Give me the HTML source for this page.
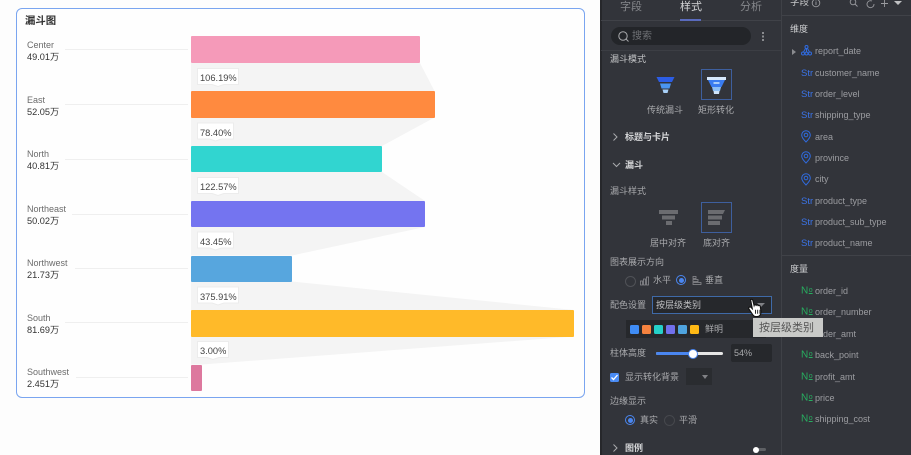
<!DOCTYPE html>
<html><head><meta charset="utf-8">
<style>
html,body{margin:0;padding:0}
body{width:911px;height:455px;overflow:hidden;background:#fdfdfd;position:relative;font-family:"Liberation Sans","Noto Sans CJK SC",sans-serif}
.t{position:absolute;white-space:nowrap;line-height:12px;height:12px;font-size:9px;color:#a9aaad}
.b{font-weight:700;color:#d4d5d7}
.f{color:#9c9da1;left:815px}
.s{left:801px;color:#3b74e8;font-size:9.5px;margin-top:1px}
.n{left:801px;color:#27ae60;font-size:10px}
.n span{font-size:7px;text-decoration:underline;vertical-align:1.500px;margin-left:.5px}
.l{color:#6b6b6b}.v{color:#333;font-size:9.2px}
.p{color:#444;font-size:9.3px;left:200px}
.a{position:absolute}
.line{position:absolute;height:1px;background:#efefef}
.bar{position:absolute;left:191px;border-radius:1px}
.sw{position:absolute;top:325px;width:9px;height:9px;border-radius:1.5px}
</style></head><body>
<div class="a" style="left:16px;top:8px;width:569px;height:390px;box-sizing:border-box;border:1px solid #7aa5f0;border-radius:6px;background:#fefefe"></div>
<div class="t" style="left:25px;top:16px;font-size:10.4px;font-weight:700;color:#333">漏斗图</div>
<svg class="a" style="left:0;top:0" width="600" height="455"><g fill="#f4f4f4">
<polygon points="191,63 420,63 434.5,91 191,91"/>
<polygon points="191,117.5 434.5,117.5 382,146 191,146"/>
<polygon points="191,172 382,172 425,201 191,201"/>
<polygon points="191,227 425,227 292,255.5 191,255.5"/>
<polygon points="191,281.5 292,281.5 574,310 191,310"/>
<polygon points="191,336.5 574,336.5 202,364.5 191,364.5"/>
</g>
<g fill="#fff" stroke="#ececec" stroke-width="1" stroke-linejoin="round">
<polygon points="197.5,68.5 238.5,68.5 238.5,84.5 224,84.5 218,86.5 212,84.5 197.5,84.5"/>
<polygon points="197.5,123 233.5,123 233.5,139 221.5,139 215.5,141 209.5,139 197.5,139"/>
<polygon points="197.5,177.5 238.5,177.5 238.5,193.5 224,193.5 218,195.5 212,193.5 197.5,193.5"/>
<polygon points="197.5,232 233.5,232 233.5,248 221.5,248 215.5,250 209.5,248 197.5,248"/>
<polygon points="197.5,287 238.5,287 238.5,303 224,303 218,305 212,303 197.5,303"/>
<polygon points="197.5,341.5 228.5,341.5 228.5,357.5 219,357.5 213,359.5 207,357.5 197.5,357.5"/>
</g></svg>
<div class="bar" style="top:36px;width:229px;height:27px;background:#f59ab9"></div>
<div class="bar" style="top:91px;width:243.5px;height:26.5px;background:#ff8a3f"></div>
<div class="bar" style="top:146px;width:191px;height:26px;background:#31d5d0"></div>
<div class="bar" style="top:201px;width:234px;height:26px;background:#7474f0"></div>
<div class="bar" style="top:255.5px;width:101px;height:26px;background:#57a6de"></div>
<div class="bar" style="top:310px;width:383px;height:26.5px;background:#ffba29"></div>
<div class="bar" style="top:364.5px;width:11px;height:26.5px;background:#dd789e"></div>

<div class="t l" style="left:27px;top:39px">Center</div><div class="t v" style="left:27px;top:51px">49.01万</div>
<div class="t l" style="left:27px;top:93.5px">East</div><div class="t v" style="left:27px;top:105.5px">52.05万</div>
<div class="t l" style="left:27px;top:148px">North</div><div class="t v" style="left:27px;top:160px">40.81万</div>
<div class="t l" style="left:27px;top:203px">Northeast</div><div class="t v" style="left:27px;top:215px">50.02万</div>
<div class="t l" style="left:27px;top:257px">Northwest</div><div class="t v" style="left:27px;top:269px">21.73万</div>
<div class="t l" style="left:27px;top:311.5px">South</div><div class="t v" style="left:27px;top:323.5px">81.69万</div>
<div class="t l" style="left:27px;top:366px">Southwest</div><div class="t v" style="left:27px;top:378px">2.451万</div>
<div class="line" style="left:65px;width:123px;top:49px"></div>
<div class="line" style="left:65px;width:123px;top:104px"></div>
<div class="line" style="left:65px;width:123px;top:159px"></div>
<div class="line" style="left:72px;width:116px;top:214px"></div>
<div class="line" style="left:75px;width:113px;top:268px"></div>
<div class="line" style="left:65px;width:123px;top:322px"></div>
<div class="line" style="left:76px;width:112px;top:377px"></div>

<div class="t p" style="top:72px">106.19%</div>
<div class="t p" style="top:126.5px">78.40%</div>
<div class="t p" style="top:181px">122.57%</div>
<div class="t p" style="top:235.5px">43.45%</div>
<div class="t p" style="top:290.5px">375.91%</div>
<div class="t p" style="top:345px">3.00%</div>

<!-- panels -->
<div class="a" style="left:600px;top:0;width:311px;height:455px;background:#32343a"></div>
<div class="a" style="left:600px;top:0;width:1.5px;height:455px;background:#26272b"></div>
<div class="a" style="left:781px;top:0;width:1px;height:455px;background:#3f4147"></div>
<div class="a" style="left:601px;top:20px;width:180px;height:1px;background:#404248"></div>
<div class="a" style="left:601px;top:50px;width:180px;height:1px;background:#3c3e44"></div>
<div class="a" style="left:782px;top:15px;width:129px;height:1px;background:#404248"></div>
<div class="a" style="left:782px;top:255px;width:129px;height:1px;background:#404248"></div>

<div class="t" style="left:620px;top:0.5px;font-size:11px;color:#85878b">字段</div>
<div class="t" style="left:680px;top:0.5px;font-size:11px;color:#d5d6d8">样式</div>
<div class="t" style="left:740px;top:0.5px;font-size:11px;color:#85878b">分析</div>
<div class="a" style="left:680px;top:19px;width:21px;height:2px;background:#5a6bbd"></div>

<div class="a" style="left:611px;top:27px;width:140px;height:18px;border-radius:9px;background:#232529"></div>
<svg class="a" style="left:617px;top:30px" width="13" height="13" fill="none" stroke="#a9aaad" stroke-width="1"><circle cx="6" cy="6" r="4.2"/><path d="M9 9l2.5 2.5"/></svg>
<div class="t" style="left:632px;top:31px;font-size:10px;color:#6e7074">搜索</div>
<div class="a" style="left:762px;top:32px;width:2px;height:2px;background:#8a8b8f;box-shadow:0 3.5px #8a8b8f,0 7px #8a8b8f"></div>

<div class="t" style="left:610px;top:52.5px;color:#c3c4c6">漏斗模式</div>
<svg class="a" style="left:650px;top:72px" width="30" height="26"><polygon points="6.5,5 24.5,5 22,10 9,10" fill="#2c5de5"/><polygon points="10,11.5 21,11.5 19.5,16.5 11.5,16.5" fill="#4a95f0"/><polygon points="12.5,17.5 18.5,17.5 17.5,21 13.5,21" fill="#a8d0f8"/></svg>
<div class="a" style="left:701px;top:69px;width:31px;height:31px;box-sizing:border-box;border:1px solid #3e5f9e"></div>
<svg class="a" style="left:701px;top:69px" width="31" height="31"><polygon points="6,8 25,8 25,11 6,11" fill="#d8e9fc"/><polygon points="7,11 24,11 20.5,18 10.5,18" fill="#3a7cf0"/><rect x="12.5" y="13" width="6" height="2" fill="#a9cdf8"/><polygon points="11,18 20,18 19,22 12,22" fill="#8dc0f7"/><polygon points="12.5,22 18.5,22 18,25 13,25" fill="#cfe4fb"/></svg>
<div class="t" style="left:647px;top:104px">传统漏斗</div>
<div class="t" style="left:698px;top:104px">矩形转化</div>

<svg class="a" style="left:611px;top:131px" width="9" height="12" fill="none" stroke="#a9aaad"><path d="M2.5 2.5l3.5 3.5-3.5 3.5"/></svg>
<div class="t b" style="left:625px;top:131px">标题与卡片</div>
<svg class="a" style="left:611px;top:160px" width="10" height="10" fill="none" stroke="#a9aaad"><path d="M2 3l3.5 3.5L9 3"/></svg>
<div class="t b" style="left:625px;top:159px">漏斗</div>
<div class="t" style="left:610px;top:185px">漏斗样式</div>
<svg class="a" style="left:655px;top:208px" width="26" height="20" fill="#6b6c70"><rect x="4" y="2" width="19" height="4"/><rect x="7" y="7.5" width="13" height="4"/><rect x="11" y="13" width="6" height="4"/></svg>
<div class="a" style="left:701px;top:202px;width:31px;height:31px;box-sizing:border-box;border:1px solid #3e5f9e"></div>
<svg class="a" style="left:705px;top:208px" width="22" height="20" fill="#6b6c70"><polygon points="3,2 20,2 18,6 3,6"/><rect x="3" y="7.5" width="14" height="4"/><rect x="3" y="13" width="12" height="4"/></svg>
<div class="t" style="left:650px;top:237px">居中对齐</div>
<div class="t" style="left:703px;top:237px">底对齐</div>
<div class="t" style="left:610px;top:256px">图表展示方向</div>
<div class="a" style="left:625px;top:276px;width:9px;height:9px;border:1px solid #505257;border-radius:50%"></div>
<svg class="a" style="left:640px;top:276px" width="10" height="10" fill="none" stroke="#8a8b8f" stroke-width=".8"><rect x=".5" y="5" width="2" height="4"/><rect x="3.5" y="3" width="2" height="6"/><rect x="6.5" y="1" width="2" height="8"/></svg>
<div class="t" style="left:653px;top:274px">水平</div>
<div class="a" style="left:676px;top:275px;width:10px;height:10px;box-sizing:border-box;border:1px solid #4a86f0;border-radius:50%"></div>
<div class="a" style="left:678.5px;top:277.5px;width:5px;height:5px;background:#4a86f0;border-radius:50%"></div>
<svg class="a" style="left:692px;top:276px" width="10" height="10" fill="none" stroke="#8a8b8f" stroke-width=".8"><rect x="1" y=".5" width="3" height="2"/><rect x="1" y="3.5" width="5" height="2"/><rect x="1" y="6.5" width="8" height="2"/></svg>
<div class="t" style="left:705px;top:274px">垂直</div>

<div class="t" style="left:610px;top:299px">配色设置</div>
<div class="a" style="left:652px;top:296px;width:120px;height:18px;box-sizing:border-box;border:1px solid #3f6aa8;background:#26282c"></div>
<div class="t" style="left:656px;top:299px;color:#c0c1c3">按层级类别</div>
<div class="a" style="left:757px;top:303px;border-left:4px solid transparent;border-right:4px solid transparent;border-top:4px solid #808185"></div>
<div class="a" style="left:626px;top:320px;width:140px;height:18px;background:#26282c"></div>
<div class="sw" style="left:630px;background:#3f8cf5"></div>
<div class="sw" style="left:642px;background:#f5823f"></div>
<div class="sw" style="left:654px;background:#25d0c8"></div>
<div class="sw" style="left:666px;background:#7170ec"></div>
<div class="sw" style="left:678px;background:#4ea3de"></div>
<div class="sw" style="left:690px;background:#ffb915"></div>
<div class="t" style="left:705px;top:323px">鲜明</div>
<svg class="a" style="left:747px;top:298px" width="18" height="20" viewBox="0 0 16 17.8"><path d="M3.2 1.5c.9-.7 1.8-.2 2 .7l1.1 4.5c.3-1 1.4-1 1.8-.2.5-.7 1.5-.5 1.8.3.7-.5 1.700-.2 1.900.7l.7 4.500c.2 2.500-1.300 4.500-3.500 4.500H7.800c-1.300 0-2.100-.8-2.800-1.800L1.700 9.700c-.6-1.100.6-2.200 1.700-1.500l1.300 1.300z" fill="#fff" stroke="#111" stroke-width="1"/><path d="M7.500 10.500v3.500M9.500 10.500v3.500M11.500 10.500v3.500" stroke="#111" stroke-width=".8"/></svg>

<div class="t" style="left:610px;top:347px">柱体高度</div>
<div class="a" style="left:656px;top:352px;width:67px;height:2.5px;background:#e6e6e6;border-radius:2px"></div>
<div class="a" style="left:656px;top:352px;width:36px;height:2.5px;background:#4a86f0;border-radius:2px"></div>
<div class="a" style="left:688px;top:349px;width:8px;height:8px;background:#fff;border:1px solid #4a86f0;border-radius:50%"></div>
<div class="a" style="left:731px;top:344px;width:41px;height:18px;background:#26282c;border-radius:2px"></div>
<div class="t" style="left:734px;top:347px">54%</div>
<div class="a" style="left:610px;top:373px;width:9px;height:9px;background:#4a8cf5;border-radius:1.5px"></div>
<svg class="a" style="left:610px;top:373px" width="9" height="9" fill="none" stroke="#fff" stroke-width="1.3"><path d="M1.5 4.5l2 2 4-4.5"/></svg>
<div class="t" style="left:625px;top:371px">显示转化背景</div>
<div class="a" style="left:686px;top:368px;width:26px;height:17px;background:#2a2c30"></div>
<div class="a" style="left:702px;top:375px;border-left:3.5px solid transparent;border-right:3.5px solid transparent;border-top:4px solid #808185"></div>
<div class="t" style="left:610px;top:395px">边缘显示</div>
<div class="a" style="left:625px;top:415px;width:10px;height:10px;box-sizing:border-box;border:1px solid #4a86f0;border-radius:50%"></div>
<div class="a" style="left:627.5px;top:417.5px;width:5px;height:5px;background:#4a86f0;border-radius:50%"></div>
<div class="t" style="left:640px;top:414px">真实</div>
<div class="a" style="left:664px;top:415px;width:9px;height:9px;border:1px solid #46484d;border-radius:50%"></div>
<div class="t" style="left:679px;top:414px">平滑</div>
<svg class="a" style="left:611px;top:442px" width="9" height="12" fill="none" stroke="#a9aaad"><path d="M2.5 2.5l3.5 3.5-3.5 3.5"/></svg>
<div class="t b" style="left:625px;top:442px">图例</div>
<div class="a" style="left:755px;top:448px;width:11px;height:3px;background:#5e6064;border-radius:2px"></div>
<div class="a" style="left:753px;top:446.5px;width:6px;height:6px;background:#fff;border-radius:50%"></div>

<!-- field list -->
<div class="t" style="left:790px;top:-3px;font-size:9.5px;color:#c6c7c9">字段</div>
<svg class="a" style="left:811px;top:0" width="100" height="10" fill="none" stroke="#9a9b9f" stroke-width=".9"><circle cx="5" cy="3" r="3.8"/><path d="M5 2v3M5 .5v1"/><circle cx="42" cy="2" r="2.8"/><path d="M44 4l2.5 2.5"/><path d="M61 1a3.5 3.5 0 1 0 2 3"/><path d="M70 3.5h7M73.5 0v7"/></svg>
<div class="a" style="left:894px;top:1px;border-left:4px solid transparent;border-right:4px solid transparent;border-top:4px solid #c0c1c3"></div>
<div class="t" style="left:790px;top:23px;color:#cfd0d2">维度</div>
<div class="a" style="left:792px;top:49px;border-top:3px solid transparent;border-bottom:3px solid transparent;border-left:4px solid #8a8b8f"></div>
<svg class="a" style="left:801px;top:45px" width="11" height="11" fill="none" stroke="#2f6be0" stroke-width="1"><circle cx="5.5" cy="2" r="1.5"/><circle cx="2" cy="8.5" r="1.5"/><circle cx="5.5" cy="8.5" r="1.5"/><circle cx="9" cy="8.5" r="1.5"/><path d="M5.5 3.5v3.5M4.5 3.5L2.5 7M6.5 3.5L8.5 7"/></svg>
<div class="t f" style="top:45px">report_date</div>
<div class="t s" style="top:66.5px">Str</div><div class="t f" style="top:66.5px">customer_name</div>
<div class="t s" style="top:88px">Str</div><div class="t f" style="top:88px">order_level</div>
<div class="t s" style="top:109px">Str</div><div class="t f" style="top:109px">shipping_type</div>
<svg class="a" style="left:801px;top:130px" width="10" height="13" fill="none" stroke="#2f6be0"><path d="M5 12C2.5 9.5 .7 7.5 .7 5a4.3 4.3 0 0 1 8.6 0c0 2.5-1.8 4.5-4.3 7z"/><circle cx="5" cy="5" r="1.8"/></svg>
<div class="t f" style="top:130.5px">area</div>
<svg class="a" style="left:801px;top:151px" width="10" height="13" fill="none" stroke="#2f6be0"><path d="M5 12C2.5 9.5 .7 7.5 .7 5a4.3 4.3 0 0 1 8.6 0c0 2.5-1.8 4.5-4.3 7z"/><circle cx="5" cy="5" r="1.8"/></svg>
<div class="t f" style="top:152px">province</div>
<svg class="a" style="left:801px;top:173px" width="10" height="13" fill="none" stroke="#2f6be0"><path d="M5 12C2.5 9.5 .7 7.5 .7 5a4.3 4.3 0 0 1 8.6 0c0 2.5-1.8 4.5-4.3 7z"/><circle cx="5" cy="5" r="1.8"/></svg>
<div class="t f" style="top:173px">city</div>
<div class="t s" style="top:194.5px">Str</div><div class="t f" style="top:194.5px">product_type</div>
<div class="t s" style="top:216px">Str</div><div class="t f" style="top:216px">product_sub_type</div>
<div class="t s" style="top:237px">Str</div><div class="t f" style="top:237px">product_name</div>
<div class="t" style="left:790px;top:263px;color:#cfd0d2">度量</div>
<div class="t n" style="top:285px">N<span>o</span></div><div class="t f" style="top:285px">order_id</div>
<div class="t n" style="top:306px">N<span>o</span></div><div class="t f" style="top:306px">order_number</div>
<div class="t n" style="top:328px">N<span>o</span></div><div class="t f" style="top:328px">order_amt</div>
<div class="t n" style="top:349px">N<span>o</span></div><div class="t f" style="top:349px">back_point</div>
<div class="t n" style="top:370.5px">N<span>o</span></div><div class="t f" style="top:370.5px">profit_amt</div>
<div class="t n" style="top:391.5px">N<span>o</span></div><div class="t f" style="top:391.5px">price</div>
<div class="t n" style="top:413px">N<span>o</span></div><div class="t f" style="top:413px">shipping_cost</div>
<div class="a" style="left:753px;top:318px;width:70px;height:19px;background:#c9cac8"></div>
<div class="t" style="left:759px;top:321.5px;font-size:11px;color:#555">按层级类别</div>
</body></html>
